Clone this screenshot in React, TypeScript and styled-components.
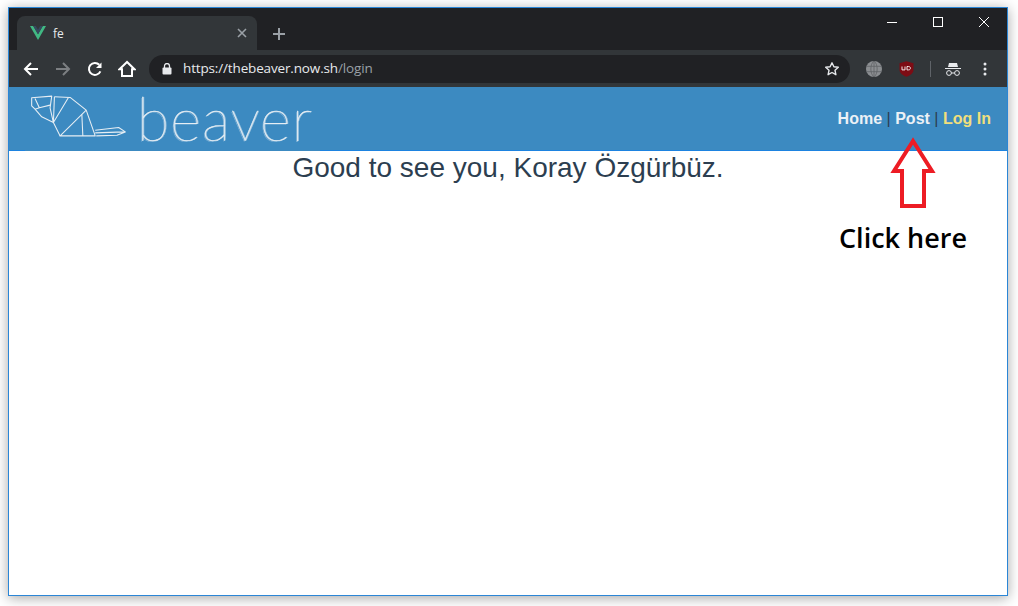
import React from "react";
import styled, { createGlobalStyle } from "styled-components";

const GlobalStyle = createGlobalStyle`
  html, body {
    margin: 0;
    padding: 0;
    background: #ffffff;
    overflow: hidden;
  }
`;

const Page = styled.div`
  width: 1018px;
  height: 606px;
  padding: 7px 10px 10px 8px;
  box-sizing: border-box;
`;

const BrowserWindow = styled.div`
  position: relative;
  display: flex;
  flex-direction: column;
  width: 1000px;
  height: 589px;
  box-sizing: border-box;
  border: 1px solid #2b86d6;
  background: #ffffff;
  box-shadow: 0 2px 12px rgba(0, 0, 0, 0.35);
  font-family: "Liberation Sans", Arial, sans-serif;
`;

const TitleBar = styled.div`
  display: flex;
  align-items: flex-end;
  height: 42px;
  padding-left: 8px;
  background: #202124;
`;

const Tab = styled.div`
  display: flex;
  align-items: center;
  width: 240px;
  height: 34px;
  box-sizing: border-box;
  padding: 0 10px 0 13px;
  border-radius: 8px 8px 0 0;
  background: #323639;
`;

const TabTitle = styled.span`
  flex: 1;
  margin-left: 7px;
  font: 12px "Open Sans", sans-serif;
  color: #e8eaed;
`;

const NewTab = styled.div`
  display: flex;
  align-items: center;
  margin: 0 0 9px 15px;
`;

const WindowControls = styled.div`
  display: flex;
  margin-left: auto;
  align-self: flex-start;
`;

const WindowControl = styled.div`
  display: flex;
  align-items: center;
  justify-content: center;
  width: 46px;
  height: 28px;
`;

const ToolBar = styled.div`
  display: flex;
  align-items: center;
  height: 37px;
  background: #323639;
`;

const NavButton = styled.div<{ $dim?: boolean; $soft?: boolean }>`
  display: flex;
  align-items: center;
  justify-content: center;
  width: 32px;
  height: 32px;
  flex: none;
  color: ${(p) => (p.$dim ? "#7c7f82" : p.$soft ? "#e8eaed" : "#ffffff")};
`;

const NavButtons = styled.div`
  display: flex;
  margin-left: 6px;
`;

const AddressBar = styled.div`
  display: flex;
  align-items: center;
  width: 701px;
  height: 28px;
  margin-left: 6px;
  padding: 0 10px 0 13px;
  box-sizing: border-box;
  border-radius: 14px;
  background: #202124;
`;

const Url = styled.div`
  flex: 1;
  margin: 0 0 1px 11px;
  font: 13.5px "Open Sans", sans-serif;
  letter-spacing: -0.15px;
  color: #e8eaed;
`;

const UrlMuted = styled.span`
  color: #9aa0a6;
`;

const Extensions = styled.div`
  display: flex;
  align-items: center;
  margin-left: 8px;
`;

const Divider = styled.div`
  width: 1px;
  height: 16px;
  margin: 0 6px 0 8px;
  background: #5f6368;
`;

const SiteHeader = styled.header`
  display: flex;
  justify-content: space-between;
  height: 64px;
  box-sizing: border-box;
  padding: 0 16px;
  border-bottom: 1px solid #1d83e0;
  background: #3c8ac1;
`;

/* the logo image sits over the header's bottom border */
const Brand = styled.div`
  display: flex;
  align-items: flex-start;
  width: 295px;
  height: 64px;
  box-sizing: border-box;
  padding: 8px 0 0 5px;
  background: #3c8ac1;
`;

const Wordmark = styled.span`
  margin: -8px 0 0 10px;
  font: 100 59px/64px Lato, "Open Sans", sans-serif;
  letter-spacing: 1.2px;
  color: #e6eef4;
  -webkit-text-stroke: 0.4px #e6eef4;
  text-shadow: 1px 0 0 rgba(230, 238, 244, 0.6), -1px 1px 0 rgba(230, 238, 244, 0.4);
`;

const Nav = styled.nav`
  display: flex;
  align-items: center;
  gap: 4.5px;
  font-size: 16px;
  font-weight: 700;
  color: #2c3e50;
`;

const NavLink = styled.a<{ $active?: boolean }>`
  color: ${(p) => (p.$active ? "#f0df7d" : "#ecf1f6")};
`;

const Separator = styled.span`
  font-weight: 400;
`;

const Main = styled.main`
  flex: 1;
  padding-top: 1px;
  text-align: center;
  font-size: 28px;
  line-height: 32px;
  color: #2c3e50;
`;

const Annotation = styled.div`
  position: absolute;
  top: 125px;
  left: 830px;
  display: flex;
  flex-direction: column;
  align-items: flex-start;
`;

const ArrowIcon = styled.svg`
  margin-left: 46px;
`;

const AnnotationLabel = styled.div`
  margin-top: 7px;
  font: 600 27px/36px "Open Sans", sans-serif;
  color: #000000;
`;

const iconStroke = {
  fill: "none",
  stroke: "currentColor",
  strokeWidth: 2,
};

function App() {
  return (
    <Page>
      <GlobalStyle />
      <BrowserWindow>
        <TitleBar>
          <Tab>
            <svg width="16" height="14" viewBox="0 0 16 14">
              <path d="M0 0h3.2L8 8.2 12.8 0H16L8 14z" fill="#41b883" />
              <path d="M3.2 0h2.6L8 3.8 10.2 0h2.6L8 8.2z" fill="#35495e" />
            </svg>
            <TabTitle>fe</TabTitle>
            <svg width="10" height="10" viewBox="0 0 10 10" style={{ color: "#9aa0a6" }}>
              <path d="M1 1l8 8M9 1l-8 8" {...iconStroke} strokeWidth={1.6} />
            </svg>
          </Tab>
          <NewTab>
            <svg width="14" height="14" viewBox="0 0 14 14" style={{ color: "#9aa0a6" }}>
              <path d="M7 1v12M1 7h12" {...iconStroke} />
            </svg>
          </NewTab>
          <WindowControls>
            <WindowControl>
              <svg width="10" height="10" viewBox="0 0 10 10" style={{ color: "#fff" }}>
                <path d="M0 5.5h10" {...iconStroke} strokeWidth={1} />
              </svg>
            </WindowControl>
            <WindowControl>
              <svg width="10" height="10" viewBox="0 0 10 10" style={{ color: "#fff" }}>
                <rect x="0.5" y="0.5" width="9" height="9" {...iconStroke} strokeWidth={1} />
              </svg>
            </WindowControl>
            <WindowControl>
              <svg width="10" height="10" viewBox="0 0 10 10" style={{ color: "#fff" }}>
                <path d="M0 0l10 10M10 0L0 10" {...iconStroke} strokeWidth={1} />
              </svg>
            </WindowControl>
          </WindowControls>
        </TitleBar>

        <ToolBar>
          <NavButtons>
            <NavButton>
              <svg width="16" height="16" viewBox="0 0 16 16">
                <path d="M15 8H2M8 2L2 8l6 6" {...iconStroke} />
              </svg>
            </NavButton>
            <NavButton $dim>
              <svg width="16" height="16" viewBox="0 0 16 16">
                <path d="M1 8h13M8 2l6 6-6 6" {...iconStroke} />
              </svg>
            </NavButton>
            <NavButton>
              <svg width="16" height="16" viewBox="0 0 16 16">
                <path d="M13.4 10.4A6 6 0 1 1 12.3 3.8" {...iconStroke} />
                <path d="M14.5 1.5v5.5H9z" fill="currentColor" />
              </svg>
            </NavButton>
            <NavButton>
              <svg width="18" height="18" viewBox="0 0 18 18">
                <path d="M9 2L1.5 9.2H4V16h10V9.2h2.5z" {...iconStroke} strokeLinejoin="miter" />
              </svg>
            </NavButton>
          </NavButtons>

          <AddressBar>
            <svg width="10" height="12" viewBox="0 0 10 12" style={{ color: "#e8eaed" }}>
              <rect x="0.5" y="4.5" width="9" height="7" rx="1" fill="currentColor" />
              <path d="M2.5 5V3a2.5 2.5 0 0 1 5 0v2" {...iconStroke} strokeWidth={1.3} />
            </svg>
            <Url>
              https://thebeaver.now.sh<UrlMuted>/login</UrlMuted>
            </Url>
            <svg width="16" height="16" viewBox="0 0 16 16" style={{ color: "#e8eaed" }}>
              <path
                d="M8 1.8l1.9 4 4.4.5-3.3 3 .9 4.4L8 11.5l-3.9 2.2.9-4.4-3.3-3 4.4-.5z"
                {...iconStroke}
                strokeWidth={1.4}
                strokeLinejoin="round"
              />
            </svg>
          </AddressBar>

          <Extensions>
            <NavButton>
              <svg width="16" height="16" viewBox="0 0 16 16">
                <circle cx="8" cy="8" r="8" fill="#8b8e91" />
                <path
                  d="M0 5.3h16M0 10.7h16M8 0v16M8 0C3.8 3 3.8 13 8 16M8 0c4.2 3 4.2 13 0 16"
                  fill="none"
                  stroke="#5f6265"
                  strokeWidth="0.8"
                />
              </svg>
            </NavButton>
            <NavButton>
              <svg width="15" height="16" viewBox="0 0 15 16">
                <path d="M7.5 0.3L14.5 2.2v6.3c0 3.4-3 5.9-7 7.2-4-1.3-7-3.8-7-7.2V2.2z" fill="#7d0c14" />
                <path d="M3 5.5v3.4h3V5.5M8 5.5v3.4h1.6c2.4 0 2.4-3.4 0-3.4z" fill="none" stroke="#f2e8e8" strokeWidth="1" />
              </svg>
            </NavButton>
            <Divider />
            <NavButton $soft>
              <svg width="16" height="14" viewBox="0 0 16 14">
                <path d="M4 1h8l1 4H3zM0 6h16v1H0z" fill="currentColor" />
                <circle cx="4" cy="11" r="2.4" {...iconStroke} strokeWidth={1} />
                <circle cx="12" cy="11" r="2.4" {...iconStroke} strokeWidth={1} />
                <path d="M6.4 11h3.2" {...iconStroke} strokeWidth={1} />
              </svg>
            </NavButton>
            <NavButton $soft>
              <svg width="4" height="14" viewBox="0 0 4 14">
                <circle cx="2" cy="2" r="1.5" fill="currentColor" />
                <circle cx="2" cy="7" r="1.5" fill="currentColor" />
                <circle cx="2" cy="12" r="1.5" fill="currentColor" />
              </svg>
            </NavButton>
          </Extensions>
        </ToolBar>

        <SiteHeader>
          <Brand>
            <svg
              width="97"
              height="42"
              viewBox="90 30 290 125"
              fill="none"
              stroke="#e6eef4"
              strokeWidth="3.2"
              strokeLinejoin="round"
            >
              <path d="M95 38L155 33 150 68 160 112 125 95 105 72 95 62z" />
              <path d="M105 40L118 68 150 60M118 68L105 72" />
              <path d="M163 35L210 37 258 75 285 152 180 152 258 75" />
              <path d="M163 35L160 112 180 152M205 37L160 112M245 88L248 152" />
              <path d="M285 135L355 127 375 140 350 150 288 152M285 143L372 140" />
            </svg>
            <Wordmark>beaver</Wordmark>
          </Brand>
          <Nav>
            <NavLink>Home</NavLink>
            <Separator>|</Separator>
            <NavLink>Post</NavLink>
            <Separator>|</Separator>
            <NavLink $active>Log In</NavLink>
          </Nav>
        </SiteHeader>

        <Main>Good to see you, Koray Özgürbüz.</Main>

        <Annotation>
          <ArrowIcon width="58" height="80" viewBox="0 0 58 80">
            <path
              d="M28 8L9 38H17V73H39V38H47z"
              fill="none"
              stroke="#ed1c24"
              strokeWidth="4"
              strokeLinejoin="miter"
            />
          </ArrowIcon>
          <AnnotationLabel>Click here</AnnotationLabel>
        </Annotation>
      </BrowserWindow>
    </Page>
  );
}

export default App;
